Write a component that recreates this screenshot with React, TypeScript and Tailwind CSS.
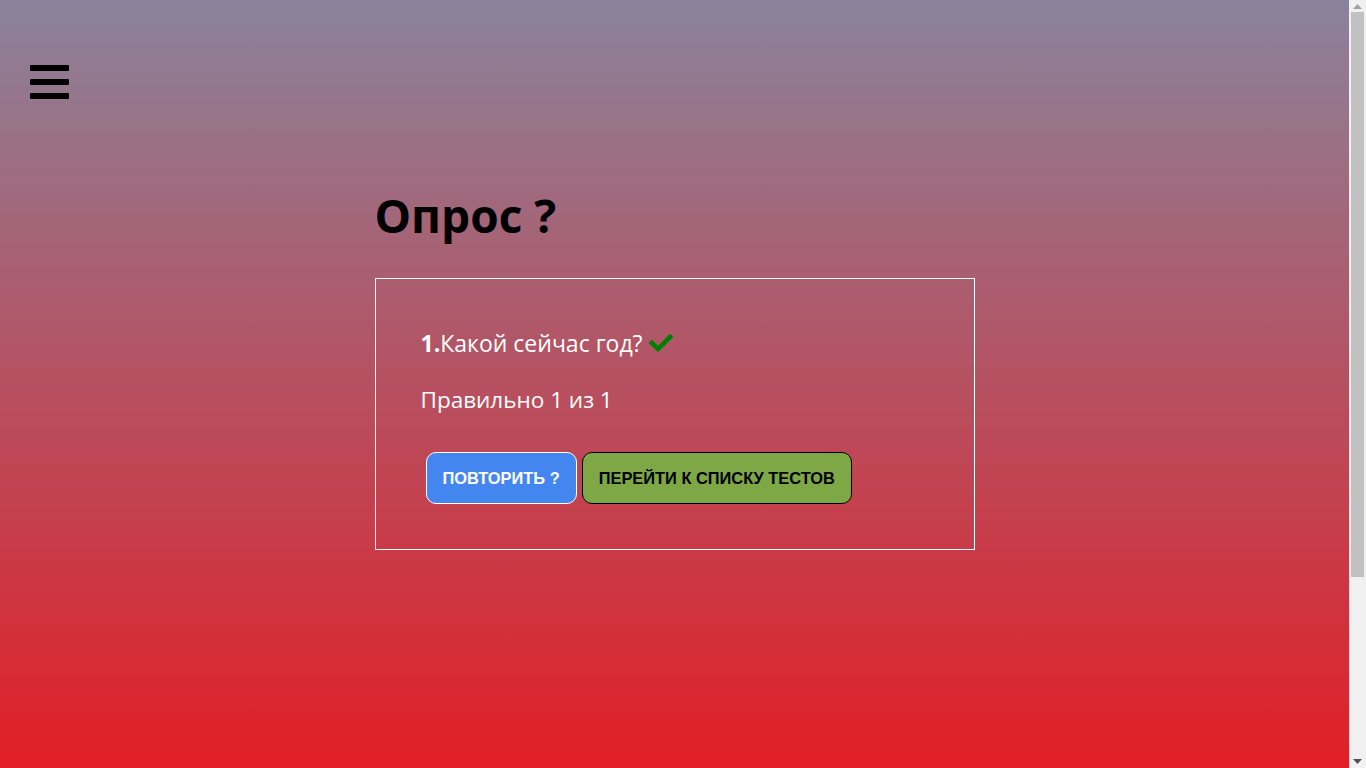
import React from 'react';
import { FaCheck } from 'react-icons/fa';

function Scrollbar() {
  return (
    <div className="w-[17px] h-screen bg-[#f1f1f1] flex flex-col items-center shrink-0">
      <div className="h-[12px] flex items-center justify-center">
        <svg width="9" height="5" viewBox="0 0 9 5"><path d="M4.5 0 9 5H0z" fill="#a3a3a3" /></svg>
      </div>
      <div className="w-[13px] h-[565px] bg-[#c1c1c1]" />
      <div className="flex-1" />
      <div className="h-[14px] flex items-center justify-center">
        <svg width="9" height="5" viewBox="0 0 9 5"><path d="M0 0h9L4.5 5z" fill="#505050" /></svg>
      </div>
    </div>
  );
}

export default function App() {
  return (
    <div className="flex h-screen overflow-hidden">
      <div className="flex-1 h-screen bg-[linear-gradient(to_bottom,#8a839b,#e21e26)] font-['Open_Sans',sans-serif]">
        <div className="pt-[65px] pl-[30px]">
          <button className="flex flex-col gap-[8px]" aria-label="menu">
            <span className="block w-[39px] h-[6px] bg-black rounded-[1px]" />
            <span className="block w-[39px] h-[6px] bg-black rounded-[1px]" />
            <span className="block w-[39px] h-[6px] bg-black rounded-[1px]" />
          </button>
        </div>

        <div className="w-[600px] mx-auto">
          <h1 className="mt-[88px] text-[46px] font-bold leading-[56px] text-black">Опрос ?</h1>

          <div className="mt-[35px] border border-white pt-[46px] pb-[45px] pl-[45px] pr-[45px] text-white">
            <p className="text-[23px] leading-[36px] flex items-center">
              <span className="font-bold">1.</span>Какой сейчас год?
              <FaCheck className="ml-[6px] text-[#008000]" size={24} />
            </p>
            <p className="mt-[21px] text-[22.5px] leading-[36px]">Правильно 1 из 1</p>

            <div className="mt-[34px] ml-[5px] flex gap-[5px] font-['Liberation_Sans',Arial,sans-serif]">
              <button className="h-[52px] px-4 rounded-[10px] border border-white bg-[#4386ef] text-white text-[16.4px] font-bold uppercase">
                Повторить ?
              </button>
              <button className="h-[52px] px-4 rounded-[10px] border border-black bg-[#7ea845] text-black text-[16.4px] font-bold uppercase">
                Перейти к списку тестов
              </button>
            </div>
          </div>
        </div>
      </div>
      <Scrollbar />
    </div>
  );
}
